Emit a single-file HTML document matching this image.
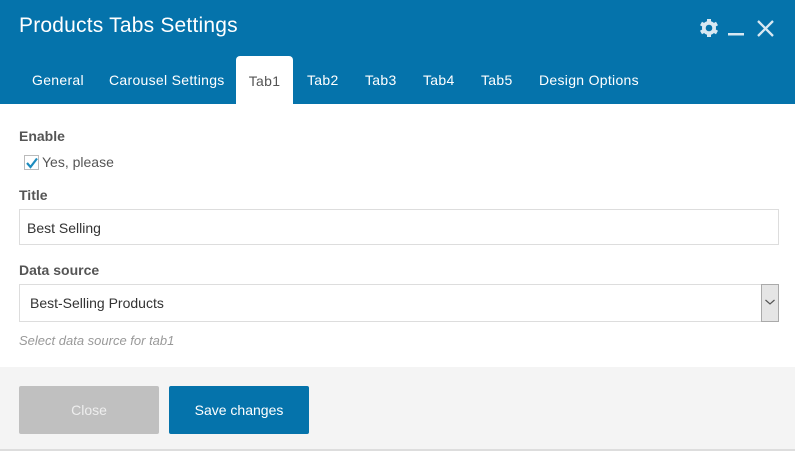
<!DOCTYPE html>
<html><head><style>
*{margin:0;padding:0;box-sizing:border-box}
body{width:795px;height:453px;overflow:hidden;background:#fff;font-family:"Liberation Sans",sans-serif;position:relative}
.hdr{position:absolute;left:0;top:0;width:795px;height:104px;background:#0573ab}
.title{position:absolute;left:19px;top:14px;font-size:21px;color:#fff;letter-spacing:0.2px}
.tab{position:absolute;top:72px;font-size:14px;color:#fff;letter-spacing:0.3px}
.act{position:absolute;left:236px;top:56px;width:57px;height:48px;background:#fff;border-radius:4px 4px 0 0;color:#555;font-size:14px;text-align:center;line-height:50px;letter-spacing:0.3px}
.lbl{position:absolute;left:19px;font-size:14px;font-weight:bold;color:#555}
.inp{position:absolute;left:19px;width:760px;border:1px solid #ddd;background:#fff;font-size:14px;color:#333;padding-left:7px}
.foot{position:absolute;left:0;top:367px;width:795px;height:84px;background:#f4f4f4;border-bottom:2px solid #ddd}
.btn{position:absolute;top:386px;width:140px;height:48px;font-size:14px;text-align:center;line-height:48px;border-radius:2px}
</style></head><body>
<div class="hdr">
<div class="title">Products Tabs Settings</div>
<div class="tab" style="left:32px">General</div>
<div class="tab" style="left:109px">Carousel Settings</div>
<div class="act">Tab1</div>
<div class="tab" style="left:307px">Tab2</div>
<div class="tab" style="left:365px">Tab3</div>
<div class="tab" style="left:423px">Tab4</div>
<div class="tab" style="left:481px">Tab5</div>
<div class="tab" style="left:539px">Design Options</div>
<svg style="position:absolute;left:699px;top:18px" width="80" height="20" viewBox="0 0 80 20">
<g fill="#d8e8f2"><circle cx="10" cy="10" r="7"/>
<g stroke="#d8e8f2" stroke-width="4"><line x1="10" y1="1" x2="10" y2="19"/><line x1="2" y1="5.5" x2="18" y2="14.5"/><line x1="2" y1="14.5" x2="18" y2="5.5"/></g></g>
<circle cx="10" cy="10" r="3.3" fill="#0573ab"/>
<rect x="29" y="15" width="16" height="2.5" fill="#d8e8f2"/>
<path d="M59 3 L74 18 M74 3 L59 18" stroke="#d8e8f2" stroke-width="2.3"/>
</svg>
</div>
<div class="lbl" style="top:128px">Enable</div>
<div style="position:absolute;left:24px;top:155px;width:15px;height:15px;border:1px solid #bbb;background:#fff"></div>
<svg style="position:absolute;left:25px;top:156px" width="14" height="14"><path d="M2 7 L5.5 11 L12 2.5" stroke="#1e8cbe" stroke-width="2.2" fill="none"/></svg>
<div style="position:absolute;left:42px;top:154px;font-size:14px;color:#555">Yes, please</div>
<div class="lbl" style="top:187px">Title</div>
<div class="inp" style="top:209px;height:36px;line-height:36px">Best Selling</div>
<div class="lbl" style="top:262px">Data source</div>
<div class="inp" style="top:284px;height:38px;line-height:36px;padding-left:10px">Best-Selling Products</div>
<div style="position:absolute;left:761px;top:284px;width:18px;height:38px;border:1px solid #aaa;background:#e5e5e5"></div>
<svg style="position:absolute;left:764px;top:298px" width="12" height="8"><path d="M1.5 2 L6 6 L10.5 2" stroke="#555" stroke-width="1.2" fill="none"/></svg>
<div style="position:absolute;left:19px;top:333px;font-size:13px;font-style:italic;color:#999">Select data source for tab1</div>
<div class="foot"></div>
<div class="btn" style="left:19px;background:#c0c0c0;color:#eee">Close</div>
<div class="btn" style="left:169px;background:#0573ab;color:#fff">Save changes</div>
</body></html>
